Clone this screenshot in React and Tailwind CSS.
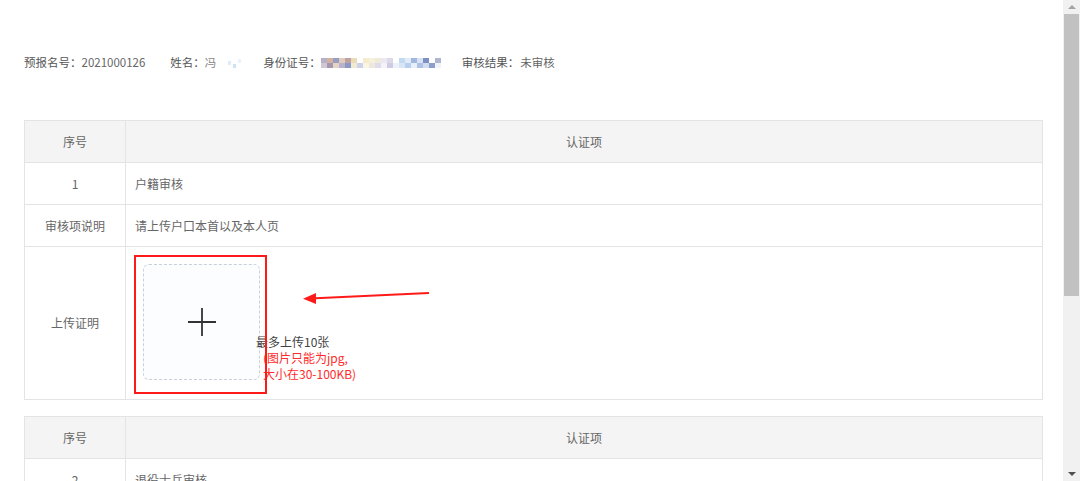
import React from 'react';

const font = { fontFamily: '"Noto Sans CJK SC", "Noto Sans", sans-serif' };

// pixelated (mosaic) blocks standing in for the blurred ID number
const idTop = [
    'bg-[#a79cbc]', 'bg-[#c9a08a]', 'bg-[#7f86b0]', 'bg-[#d8c0b0]', 'bg-[#b08a8a]',
    'bg-[#e6d4a8]', 'bg-[#ffffff]', 'bg-[#f3e7c4]', 'bg-[#f5eed4]', 'bg-[#efe6d0]',
    'bg-[#e8e3f0]', 'bg-[#d6d0e6]', 'bg-[#ffffff]', 'bg-[#b4d0f0]', 'bg-[#dbe8f6]',
    'bg-[#8aa6d8]', 'bg-[#d0dcf0]', 'bg-[#5f74b8]', 'bg-[#ffffff]', 'bg-[#9aa4c8]',
];
const idBottom = [
    'bg-[#c8b8c8]', 'bg-[#8e7f9c]', 'bg-[#e0c8b8]', 'bg-[#a8a0c0]', 'bg-[#6f7fb8]',
    'bg-[#f0e4c8]', 'bg-[#c0c8e8]', 'bg-[#fbf4dc]', 'bg-[#e9e2d4]', 'bg-[#d8d4e8]',
    'bg-[#f4f0f8]', 'bg-[#c4c0dc]', 'bg-[#e8f0fa]', 'bg-[#cfe0f3]', 'bg-[#a8c4ec]',
    'bg-[#e4ecf8]', 'bg-[#9cb4e0]', 'bg-[#c8d4ec]', 'bg-[#7088c0]', 'bg-[#f0f0f8]',
];

const Scrollbar = () => (
    <div className="w-[17px] shrink-0 bg-[#f1f1f1] flex flex-col items-center h-[481px]">
        <div className="h-[14px] w-full flex items-center justify-center">
            <div className="w-0 h-0 border-l-[4px] border-r-[4px] border-b-[4px] border-l-transparent border-r-transparent border-b-[#a3a3a3]" />
        </div>
        <div className="w-[15px] h-[282px] bg-[#c1c1c1]" />
        <div className="flex-1" />
        <div className="h-[14px] w-full flex items-center justify-center">
            <div className="w-0 h-0 border-l-[4px] border-r-[4px] border-t-[4px] border-l-transparent border-r-transparent border-t-[#505050]" />
        </div>
    </div>
);

const HeaderRow = () => (
    <tr className="bg-[#f4f4f4] h-[42px]">
        <td className="w-[101px] border border-[#e4e4e4] text-center">序号</td>
        <td className="border border-[#e4e4e4] text-center">认证项</td>
    </tr>
);

const UploadCell = () => (
    <div className="relative h-[152px] pl-[17px] pt-[17px]">
        <div className="flex items-end">
            <div className="w-[117px] h-[116px] rounded-[6px] border border-dashed border-[#c8d0da] bg-[#fbfdff] flex items-center justify-center">
                <svg width="30" height="30" viewBox="0 0 30 30">
                    <path d="M15 1v28M1 15h28" stroke="#333" strokeWidth="1.8" />
                </svg>
            </div>
            <div className="ml-[-4px] mb-[-2px] leading-[16px]">
                <div className="text-[#444]">最多上传10张</div>
                <div className="pl-[7px] text-[#ff2b2b]">(图片只能为jpg,</div>
                <div className="pl-[7px] text-[#ff2b2b]">大小在30-100KB)</div>
            </div>
        </div>
        {/* annotation overlay */}
        <div className="absolute left-[8px] top-[8px] w-[133px] h-[139px] border-2 border-[#ff1a1a]" />
        <svg className="absolute left-[170px] top-[39px]" width="140" height="20" viewBox="0 0 140 20">
            <line x1="133" y1="7" x2="14" y2="12.5" stroke="#ff1a1a" strokeWidth="2" />
            <polygon points="7,12.8 20,7 20,18" fill="#ff1a1a" />
        </svg>
    </div>
);

const App = () => {
    return (
        <div className="flex w-[1080px] h-[481px] overflow-hidden bg-white text-[12px] text-[#666]" style={font}>
            <div className="flex-1 pl-[24px] pr-[20px] pt-[54px]">
                {/* applicant info line */}
                <div className="flex items-center h-[18px] text-[11.5px] text-[#666]">
                    <span className="text-[#555]">预报名号：</span>
                    <span>2021000126</span>
                    <span className="ml-[25px] text-[#555]">姓名：</span>
                    <span className="text-[#888]">冯</span>
                    <span className="w-[47px] flex items-center gap-[2px] pl-[12px] opacity-70">
                        <span className="w-[3px] h-[4px] bg-[#cfe4f6]" />
                        <span className="w-[3px] h-[4px] bg-[#b8d8f2] mt-[6px]" />
                        <span className="w-[3px] h-[4px] bg-[#e0eefa] mt-[-4px]" />
                    </span>
                    <span className="text-[#555]">身份证号：</span>
                    <span className="flex flex-col opacity-80">
                        <span className="flex">
                            {idTop.map((c, i) => (
                                <span key={i} className={`w-[6px] h-[5px] ${c}`} />
                            ))}
                        </span>
                        <span className="flex">
                            {idBottom.map((c, i) => (
                                <span key={i} className={`w-[6px] h-[5px] ${c}`} />
                            ))}
                        </span>
                    </span>
                    <span className="ml-[21px] text-[#555]">审核结果：</span>
                    <span className="ml-[1px]">未审核</span>
                </div>

                <table className="mt-[48px] w-full border-collapse">
                    <tbody>
                        <HeaderRow />
                        <tr className="h-[42px]">
                            <td className="border border-[#e4e4e4] text-center">1</td>
                            <td className="border border-[#e4e4e4] pl-[9px]">户籍审核</td>
                        </tr>
                        <tr className="h-[42px]">
                            <td className="border border-[#e4e4e4] text-center">审核项说明</td>
                            <td className="border border-[#e4e4e4] pl-[9px]">请上传户口本首以及本人页</td>
                        </tr>
                        <tr>
                            <td className="border border-[#e4e4e4] text-center">上传证明</td>
                            <td className="border border-[#e4e4e4] p-0">
                                <UploadCell />
                            </td>
                        </tr>
                    </tbody>
                </table>

                <table className="mt-[16px] w-full border-collapse">
                    <tbody>
                        <HeaderRow />
                        <tr className="h-[42px]">
                            <td className="border border-[#e4e4e4] text-center">2</td>
                            <td className="border border-[#e4e4e4] pl-[9px]">退役士兵审核</td>
                        </tr>
                    </tbody>
                </table>
            </div>
            <Scrollbar />
        </div>
    );
};

export default App;
